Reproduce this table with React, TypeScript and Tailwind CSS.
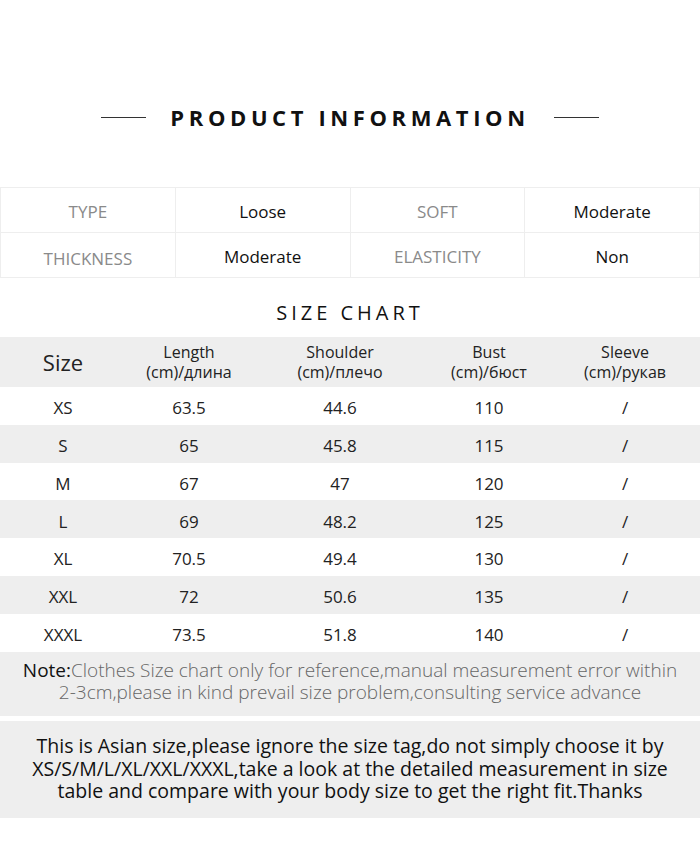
import React from "react";

const rows = [
  ["XS", "63.5", "44.6", "110", "/"],
  ["S", "65", "45.8", "115", "/"],
  ["M", "67", "47", "120", "/"],
  ["L", "69", "48.2", "125", "/"],
  ["XL", "70.5", "49.4", "130", "/"],
  ["XXL", "72", "50.6", "135", "/"],
  ["XXXL", "73.5", "51.8", "140", "/"],
];

const cols = "grid grid-cols-[126px_126px_176px_122px_150px]";

export default function App() {
  return (
    <div
      className="w-[700px] h-[858px] bg-white text-[#111]"
      style={{ fontFamily: '"Open Sans", "Noto Sans", sans-serif' }}
    >
      <div className="h-[187px] flex items-start justify-center pt-[102px]">
        <div className="flex items-center gap-[24px]">
          <div className="w-[45px] h-px bg-[#333]" />
          <div className="text-[22px] font-bold tracking-[4.6px] leading-[30px] text-[#111]">
            PRODUCT INFORMATION
          </div>
          <div className="w-[45px] h-px bg-[#333]" />
        </div>
      </div>

      <div className="grid grid-cols-4 border-t border-l border-[#eee] text-[17px]">
        {[
          ["TYPE", "Loose", "SOFT", "Moderate"],
          ["THICKNESS", "Moderate", "ELASTICITY", "Non"],
        ].map((r, i) =>
          r.map((c, j) => (
            <div
              key={`${i}-${j}`}
              className={`h-[45px] flex items-center justify-center border-r border-b border-[#eee] ${
                j % 2 === 0 ? "text-[#8a8a8a]" : "text-[#111]"
              } ${i === 1 && j === 0 ? "pt-[8px]" : "pt-[4px]"}`}
            >
              {c}
            </div>
          ))
        )}
      </div>

      <div className="h-[59px] flex items-center justify-center text-[20px] tracking-[4px] text-[#111] pt-[11px]">
        SIZE CHART
      </div>

      <div className={`${cols} bg-[#eeeeee] h-[50px] items-center text-center text-[16px] leading-[20px] text-[#222]`}>
        <div className="text-[22px]">Size</div>
        <div>Length<br />(cm)/длина</div>
        <div>Shoulder<br />(cm)/плечо</div>
        <div>Bust<br />(cm)/бюст</div>
        <div>Sleeve<br />(cm)/рукав</div>
      </div>

      {rows.map((r, i) => (
        <div
          key={r[0]}
          className={`${cols} h-[37.8px] items-center text-center text-[17px] text-[#222] pt-[4px] ${
            i % 2 === 1 ? "bg-[#eeeeee]" : "bg-white"
          }`}
        >
          {r.map((c, j) => (
            <div key={j}>{c}</div>
          ))}
        </div>
      ))}

      <div className="bg-[#eeeeee] h-[64px] flex flex-col justify-center items-center text-center text-[19px] leading-[22px] text-[#666] font-light pb-[5px]">
        <div>
          <span className="text-[#111] font-normal">Note:</span>Clothes Size chart only for reference,manual measurement error within
        </div>
        <div>2-3cm,please in kind prevail size problem,consulting service advance</div>
      </div>

      <div className="h-[5px]" />

      <div className="bg-[#eeeeee] h-[97px] flex flex-col justify-center items-center text-center text-[19.5px] leading-[22.5px] text-[#111]">
        <div>This is Asian size,please ignore the size tag,do not simply choose it by</div>
        <div>XS/S/M/L/XL/XXL/XXXL,take a look at the detailed measurement in size</div>
        <div>table and compare with your body size to get the right fit.Thanks</div>
      </div>
    </div>
  );
}
